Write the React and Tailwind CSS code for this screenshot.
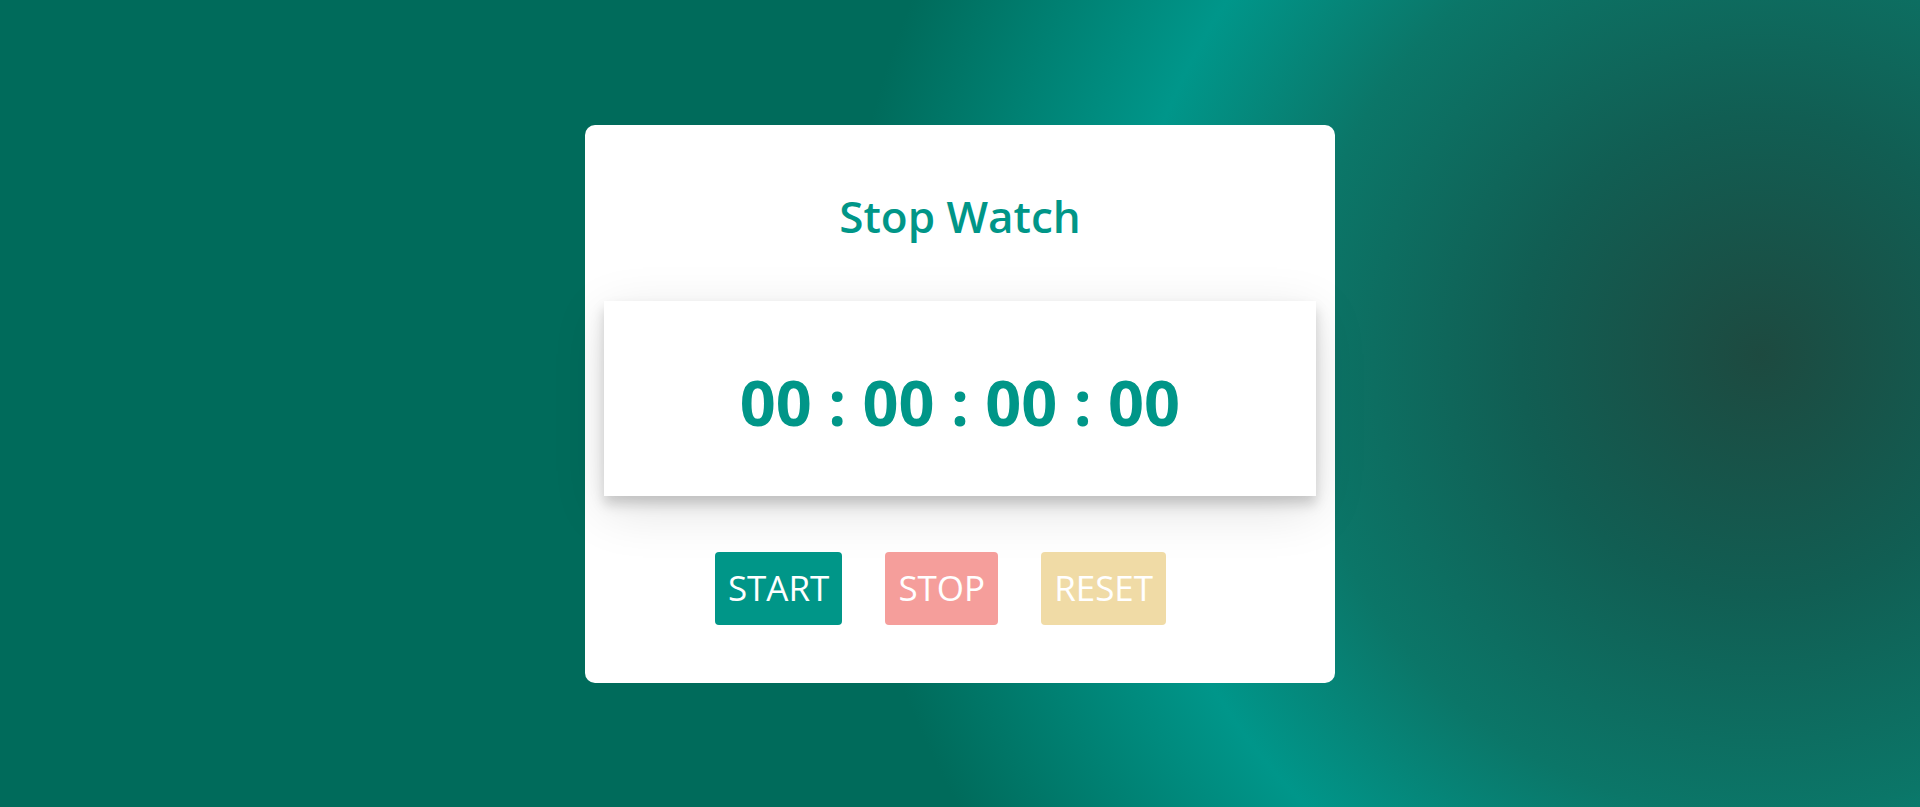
import { useEffect, useRef, useState } from 'react';

const pad = (n) => String(n).padStart(2, '0');

const StopWatch = () => {
  const [time, setTime] = useState(0);
  const [running, setRunning] = useState(false);
  const timerRef = useRef(null);

  useEffect(() => {
    if (running) {
      timerRef.current = setInterval(() => setTime((t) => t + 1), 10);
    }
    return () => clearInterval(timerRef.current);
  }, [running]);

  const hours = Math.floor(time / 360000);
  const minutes = Math.floor((time % 360000) / 6000);
  const seconds = Math.floor((time % 6000) / 100);
  const millis = time % 100;

  return (
    <div className="w-[750px] rounded-[10px] bg-white px-[19px] pt-[61px] pb-[58px]">
      <h1 className="text-center text-[44px] leading-[60px] font-semibold text-[#009688]">
        Stop Watch
      </h1>
      <div className="mt-[55px] flex h-[195px] items-center justify-center bg-white pt-[6px] shadow-[0_8px_12px_rgba(0,0,0,0.18),0_14px_50px_rgba(0,0,0,0.12)]">
        <p className="text-[63px] leading-none font-bold text-[#009688]">
          {pad(hours)} : {pad(minutes)} : {pad(seconds)} : {pad(millis)}
        </p>
      </div>
      <div className="mt-[56px] flex justify-center pl-[4px]">
        <button
          onClick={() => setRunning(true)}
          className="mr-[43px] flex h-[73px] items-center rounded-[4px] bg-[#009688] px-[13px] text-[35px] text-white"
        >
          START
        </button>
        <button
          onClick={() => setRunning(false)}
          className="mr-[43px] flex h-[73px] items-center rounded-[4px] bg-[#f59e9b] px-[13px] text-[35px] text-white"
        >
          STOP
        </button>
        <button
          onClick={() => {
            setRunning(false);
            setTime(0);
          }}
          className="mr-[43px] flex h-[73px] items-center rounded-[4px] bg-[#f0dba6] px-[13px] text-[35px] text-white"
        >
          RESET
        </button>
      </div>
    </div>
  );
};

const App = () => {
  return (
    <div className="flex h-[807px] w-full items-center justify-center bg-[#006b5b] bg-[radial-gradient(circle_at_1760px_355px,#1d4a40_0px,#115e53_240px,#0b7668_460px,#00968a_640px,#006b5b_920px)] font-['Open_Sans',sans-serif]">
      <StopWatch />
    </div>
  );
};

export default App;
